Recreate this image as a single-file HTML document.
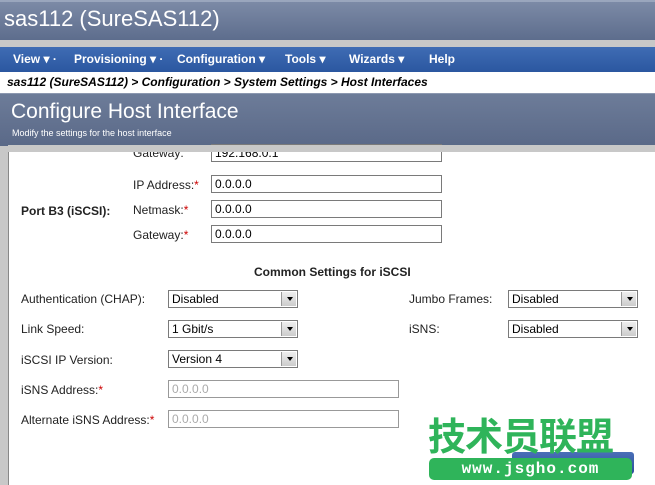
<!DOCTYPE html>
<html><head><style>
body{margin:0;width:655px;height:485px;overflow:hidden;font-family:"Liberation Sans",Arial,sans-serif;background:#c8c8c8;position:relative}
.a{position:absolute}
.hdr{left:0;top:0;width:655px;height:40px;background:linear-gradient(#7c8aa6,#5d6d8d);border-top:2px solid #9aa6bd;box-sizing:border-box;color:#fff;font-size:22px;padding:4px 0 0 4px}
.nav{left:0;top:47px;width:655px;height:25px;background:linear-gradient(#3f6cb4,#2b57a0);color:#fff;font-size:12px;font-weight:bold;line-height:25px}
.nav span{position:absolute}
.bc{left:0;top:72px;width:655px;height:21px;background:#fff;font-size:12px;font-weight:bold;font-style:italic;line-height:21px;padding-left:7px;box-sizing:border-box}
.ch{left:0;top:93px;width:655px;height:52px;background:linear-gradient(#6d7c99,#5a6988);color:#fff;border-top:1px solid #8c98b0}
.main{left:8px;top:152px;width:647px;height:333px;background:#fff;border-left:1px solid #888}
.l{position:absolute;font-size:12px;color:#222}
.r{color:#c00}
.in{position:absolute;height:18px;border:1px solid #7a7a7a;box-sizing:border-box;font-size:12px;line-height:16px;padding-left:3px;background:#fff}
.sel{position:absolute;height:18px;border:1px solid #7a7a7a;box-sizing:border-box;font-size:12px;line-height:16px;padding-left:3px;background:#fff}
.sel:after{content:"";position:absolute;right:1px;top:1px;width:14px;height:14px;background:#ddd linear-gradient(#eee,#ccc);border-left:1px solid #999}
.sel i{position:absolute;right:4px;top:6px;width:0;height:0;border-left:3px solid transparent;border-right:3px solid transparent;border-top:4px solid #000;z-index:2}
.dis{color:#aaa;border-color:#999}
</style></head><body>
<div class="a hdr">sas112 (SureSAS112)</div>
<div class="a nav"><span style="left:13px">View ▾ ·</span><span style="left:74px">Provisioning ▾ ·</span><span style="left:177px">Configuration ▾</span><span style="left:285px">Tools ▾</span><span style="left:349px">Wizards ▾</span><span style="left:429px">Help</span></div>
<div class="a bc">sas112 (SureSAS112) &gt; Configuration &gt; System Settings &gt; Host Interfaces</div>
<div class="a ch"><div style="position:absolute;left:11px;top:6px;font-size:21px">Configure Host Interface</div><div style="position:absolute;left:12px;top:34px;font-size:9px">Modify the settings for the host interface</div></div>
<div class="a main"></div>
<div class="l" style="left:133px;top:146px">Gateway:</div><div class="in" style="left:211px;top:144px;width:231px">192.168.0.1</div>
<div class="a" style="left:8px;top:145px;width:647px;height:7px;background:#c8c8c8"></div>
<div class="l" style="left:133px;top:178px">IP Address:<span class="r">*</span></div><div class="in" style="left:211px;top:175px;width:231px">0.0.0.0</div>
<div class="l" style="left:21px;top:204px;font-weight:bold">Port B3 (iSCSI):</div>
<div class="l" style="left:133px;top:203px">Netmask:<span class="r">*</span></div><div class="in" style="left:211px;top:200px;width:231px">0.0.0.0</div>
<div class="l" style="left:133px;top:228px">Gateway:<span class="r">*</span></div><div class="in" style="left:211px;top:225px;width:231px">0.0.0.0</div>
<div class="l" style="left:254px;top:265px;font-weight:bold">Common Settings for iSCSI</div>
<div class="l" style="left:21px;top:292px">Authentication (CHAP):</div><div class="sel" style="left:168px;top:290px;width:130px">Disabled<i></i></div>
<div class="l" style="left:409px;top:292px">Jumbo Frames:</div><div class="sel" style="left:508px;top:290px;width:130px">Disabled<i></i></div>
<div class="l" style="left:21px;top:322px">Link Speed:</div><div class="sel" style="left:168px;top:320px;width:130px">1 Gbit/s<i></i></div>
<div class="l" style="left:409px;top:322px">iSNS:</div><div class="sel" style="left:508px;top:320px;width:130px">Disabled<i></i></div>
<div class="l" style="left:21px;top:353px">iSCSI IP Version:</div><div class="sel" style="left:168px;top:350px;width:130px">Version 4<i></i></div>
<div class="l" style="left:21px;top:383px">iSNS Address:<span class="r">*</span></div><div class="in dis" style="left:168px;top:380px;width:231px">0.0.0.0</div>
<div class="l" style="left:21px;top:413px">Alternate iSNS Address:<span class="r">*</span></div><div class="in dis" style="left:168px;top:410px;width:231px">0.0.0.0</div>
<div class="a" style="left:512px;top:452px;width:122px;height:22px;background:linear-gradient(#4a6fb8,#2a4f98);border-radius:3px"></div>
<div class="a" style="left:428px;top:413px;font-size:38px;font-weight:bold;color:#2fb45a;font-family:'Noto Sans CJK SC',sans-serif;line-height:42px;letter-spacing:-1px">技术员联盟</div>
<div class="a" style="left:429px;top:458px;width:203px;height:22px;background:#2fb45a;border-radius:5px;color:#fff;font-family:'Liberation Mono',monospace;font-weight:bold;font-size:16px;line-height:22px;text-align:center;letter-spacing:1px">www.jsgho.com</div>
</body></html>
